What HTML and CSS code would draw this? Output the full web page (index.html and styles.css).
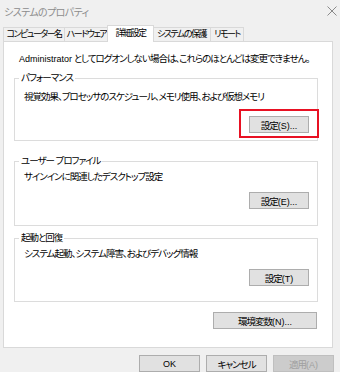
FILE: index.html
```html
<!DOCTYPE html>
<html lang="ja">
<head>
    <meta charset="UTF-8">
    <title>システムのプロパティ</title>
    <link rel="stylesheet" href="styles.css">
</head>
<body>
    <div class="dialog">
        <!-- タイトルバー -->
        <div class="titlebar">
            <span class="title">システムのプロパティ</span>
            <svg class="close" width="10" height="10" viewBox="0 0 10 10">
                <path d="M0.5 0.5 L9.5 9.5 M9.5 0.5 L0.5 9.5" stroke="#8a8a8a" stroke-width="1" fill="none"/>
            </svg>
        </div>

        <!-- タブ -->
        <div class="tabs">
            <div class="tab tab-computer">コンピューター名</div>
            <div class="tab tab-hardware">ハードウェア</div>
            <div class="tab tab-advanced active">詳細設定</div>
            <div class="tab tab-protect">システムの保護</div>
            <div class="tab tab-remote">リモート</div>
        </div>

        <div class="panel">
            <p class="notice"><span class="lat">Administrator</span> としてログオンしない場合は、これらのほとんどは変更できません。</p>

            <fieldset class="group group-perf">
                <legend>パフォーマンス</legend>
                <p class="desc">視覚効果、プロセッサのスケジュール、メモリ使用、および仮想メモリ</p>
                <div class="actions">
                    <span class="highlight"><button class="btn">設定<span class="lat">(S)...</span></button></span>
                </div>
            </fieldset>

            <fieldset class="group group-profile">
                <legend>ユーザー プロファイル</legend>
                <p class="desc">サインインに関連したデスクトップ設定</p>
                <div class="actions">
                    <button class="btn">設定<span class="lat">(E)...</span></button>
                </div>
            </fieldset>

            <fieldset class="group group-startup">
                <legend>起動と回復</legend>
                <p class="desc">システム起動、システム障害、およびデバッグ情報</p>
                <div class="actions">
                    <button class="btn">設定<span class="lat">(T)</span></button>
                </div>
            </fieldset>

            <div class="env">
                <button class="btn btn-wide">環境変数<span class="lat">(N)...</span></button>
            </div>
        </div>

        <!-- 下部ボタン -->
        <div class="footer">
            <button class="btn btn-footer"><span class="lat">OK</span></button>
            <button class="btn btn-footer">キャンセル</button>
            <button class="btn btn-footer" disabled>適用<span class="lat">(A)</span></button>
        </div>
    </div>
</body>
</html>
```

FILE: styles.css
```css
* {
    box-sizing: border-box;
}

body {
    margin: 0;
    background-color: #f0f0f0;
    font-family: "Liberation Sans", "Noto Sans CJK JP", sans-serif;
    font-size: 9.5px;
    font-feature-settings: "palt";
    letter-spacing: -1px;
    color: #000;
    overflow: hidden;
}

/* 英数字は詰めない */
.lat {
    font-size: 9px;
    letter-spacing: 0;
}

.dialog {
    width: 340px;
    height: 372px;
}

/* タイトルバー */
.titlebar {
    height: 22px;
    display: flex;
    align-items: center;
    justify-content: space-between;
    padding: 0 3px 0 4px;
}

.title {
    color: #8c8c8c;
    font-size: 10px;
    letter-spacing: -0.6px;
}

/* タブ */
.tabs {
    display: flex;
    align-items: flex-end;
    padding-left: 3px;
    margin-top: 3px;
    height: 16px;
}

.tab {
    height: 14px;
    line-height: 13px;
    display: flex;
    justify-content: center;
    white-space: nowrap;
    font-size: 9px;
    letter-spacing: -1.5px;
    border: 1px solid #d9d9d9;
    border-bottom: none;
    margin-left: -1px;
    background-color: #f0f0f0;
}

.tab-computer { width: 62px; margin-left: 0; }
.tab-hardware { width: 45px; }
.tab-advanced { width: 45px; }
.tab-protect { width: 59px; }
.tab-remote { width: 34px; }

.tab.active {
    position: relative;
    width: 47px;
    height: 17px;
    line-height: 15px;
    background-color: #fff;
    margin: 0 -1px -1px -2px;
    z-index: 1;
}

.panel {
    margin: 0 7px 0 3px;
    height: 307px;
    background-color: #fff;
    border: 1px solid #d9d9d9;
    padding: 0 14px 0 10px;
}

.notice {
    margin: 10px 0 0 5px;
    line-height: 14px;
    white-space: nowrap;
}

/* グループボックス */
.group {
    margin: 0;
    padding: 0 8px 0 9px;
    border: 1px solid #dcdcdc;
    min-width: 0;
}

.group legend {
    padding: 0 2px;
    margin-left: -5px;
    line-height: 12px;
}

.desc {
    margin: 0;
    line-height: 14px;
    white-space: nowrap;
}

.actions {
    display: flex;
    justify-content: flex-end;
}

.group-perf {
    margin-top: 6px;
    height: 69px;
}

.group-perf .desc {
    margin-top: 6px;
}

.group-perf .actions {
    margin-top: 5px;
}

.group-profile {
    margin-top: 14px;
    height: 71px;
}

.group-profile .desc,
.group-startup .desc {
    margin-top: 3px;
}

.group-profile .actions,
.group-startup .actions {
    margin-top: 8px;
}

.group-startup {
    margin-top: 6px;
    height: 70px;
}

.highlight {
    display: block;
    border: 2px solid #e81123;
    padding: 5px 8px 3px 8px;
    margin-right: -10px;
}

/* ボタン */
.btn {
    display: block;
    font-family: inherit;
    font-size: 9.5px;
    font-feature-settings: "palt";
    letter-spacing: -1px;
    width: 60px;
    height: 17px;
    padding: 0;
    background-color: #e1e1e1;
    border: 1px solid #adadad;
    border-radius: 0;
    color: #000;
}

.btn-wide {
    width: 104px;
}

.env {
    display: flex;
    justify-content: flex-end;
    margin-top: 10px;
    padding-right: 1px;
}

.footer {
    display: flex;
    justify-content: flex-end;
    gap: 6px;
    padding-right: 6px;
    margin-top: 7px;
}

.btn-footer {
    width: 61px;
}

.btn:disabled {
    background-color: #cccccc;
    border-color: #bfbfbf;
    color: #a0a0a0;
}
```
